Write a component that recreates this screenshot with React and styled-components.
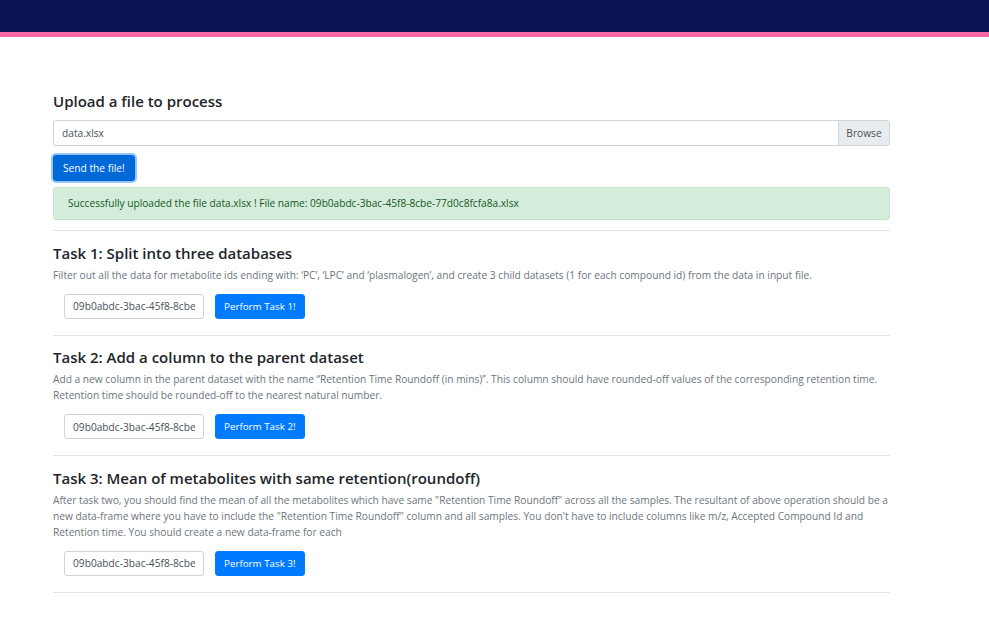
import React from 'react'
import styled, { createGlobalStyle } from 'styled-components'

const FILE_ID = '09b0abdc-3bac-45f8-8cbe-77d0c8fcfa8a.xlsx'

const tasks = [
  {
    n: 1,
    title: 'Task 1: Split into three databases',
    text: "Filter out all the data for metabolite ids ending with: ‘PC’, ‘LPC’ and ‘plasmalogen’, and create 3 child datasets (1 for each compound id) from the data in input file."
  },
  {
    n: 2,
    title: 'Task 2: Add a column to the parent dataset',
    text: 'Add a new column in the parent dataset with the name “Retention Time Roundoff (in mins)”. This column should have rounded-off values of the corresponding retention time. Retention time should be rounded-off to the nearest natural number.'
  },
  {
    n: 3,
    title: 'Task 3: Mean of metabolites with same retention(roundoff)',
    text: 'After task two, you should find the mean of all the metabolites which have same "Retention Time Roundoff" across all the samples. The resultant of above operation should be a new data-frame where you have to include the "Retention Time Roundoff" column and all samples. You don\'t have to include columns like m/z, Accepted Compound Id and Retention time. You should create a new data-frame for each'
  }
]

export default function App () {
  return (
    <>
      <GlobalStyle />
      <Navbar />
      <Container>
        <Heading>Upload a file to process</Heading>
        <FileBox>
          <FileName>data.xlsx</FileName>
          <Browse>Browse</Browse>
        </FileBox>
        <Button $focus>Send the file!</Button>
        <Alert>Successfully uploaded the file data.xlsx ! File name: {FILE_ID}</Alert>
        <Rule />
        {tasks.map(t => (
          <Task key={t.n}>
            <Heading>{t.title}</Heading>
            <Desc>{t.text}</Desc>
            <TaskRow>
              <IdInput readOnly value={FILE_ID} />
              <Button>Perform Task {t.n}!</Button>
            </TaskRow>
            <Rule $gap={16} />
          </Task>
        ))}
      </Container>
    </>
  )
}

const GlobalStyle = createGlobalStyle`
  body {
    margin: 0;
    background: #fff;
    font-family: 'Open Sans', 'Noto Sans', sans-serif;
    color: #212529;
  }
  * { box-sizing: border-box; }
`
const Navbar = styled.div`
  height: 37px;
  background: #0b1453;
  border-bottom: 5px solid #f766a5;
`
const Container = styled.main`
  width: 837px;
  margin-left: 53px;
  padding-top: 54px;
  display: flex;
  flex-direction: column;
  align-items: flex-start;
`
const Heading = styled.h4`
  margin: 0 0 9px;
  font-size: 15px;
  line-height: 20px;
  font-weight: 600;
  color: #212529;
`
const FileBox = styled.div`
  width: 100%;
  height: 26px;
  display: flex;
  border: 1px solid #ced4da;
  border-radius: 3px;
  overflow: hidden;
  margin-bottom: 9px;
`
const FileName = styled.div`
  flex: 1;
  padding: 0 8px;
  font-size: 10.2px;
  line-height: 24px;
  color: #495057;
`
const Browse = styled.div`
  width: 51px;
  background: #e9ecef;
  border-left: 1px solid #ced4da;
  font-size: 10.2px;
  line-height: 24px;
  text-align: center;
  color: #495057;
`
const Button = styled.button`
  height: ${p => (p.$focus ? '26px' : '25px')};
  padding: 0 ${p => (p.$focus ? 9 : 8)}px;
  border: 1px solid ${p => (p.$focus ? '#0062cc' : '#007bff')};
  border-radius: 3px;
  background: ${p => (p.$focus ? '#0069d9' : '#007bff')};
  color: #fff;
  font-family: inherit;
  font-size: ${p => (p.$focus ? 10.2 : 9.8)}px;
  box-shadow: ${p => (p.$focus ? '0 0 0 2px rgba(38,143,255,.5)' : 'none')};
  white-space: nowrap;
`
const Alert = styled.div`
  width: 100%;
  margin-top: 6px;
  height: 33px;
  padding: 0 14px;
  background: #d4edda;
  border: 1px solid #c3e6cb;
  border-radius: 3px;
  color: #155724;
  font-size: 10.15px;
  line-height: 31px;
`
const Rule = styled.hr`
  width: 100%;
  margin: ${p => p.$gap || 10}px 0 0;
  border: 0;
  border-top: 1px solid #e2e3e5;
`
const Task = styled.section`
  width: 100%;
  padding-top: 11.5px;
  display: flex;
  flex-direction: column;
`
const Desc = styled.p`
  margin: -5px 0 0;
  font-size: 10.2px;
  line-height: 16px;
  color: #6c757d;
`
const TaskRow = styled.div`
  display: flex;
  gap: 11px;
  margin: 11px 0 0 11px;
`
const IdInput = styled.input`
  width: 140px;
  height: 25px;
  padding: 0 8px;
  border: 1px solid #ced4da;
  border-radius: 3px;
  font-family: inherit;
  font-size: 10.2px;
  color: #495057;
  outline: none;
`
